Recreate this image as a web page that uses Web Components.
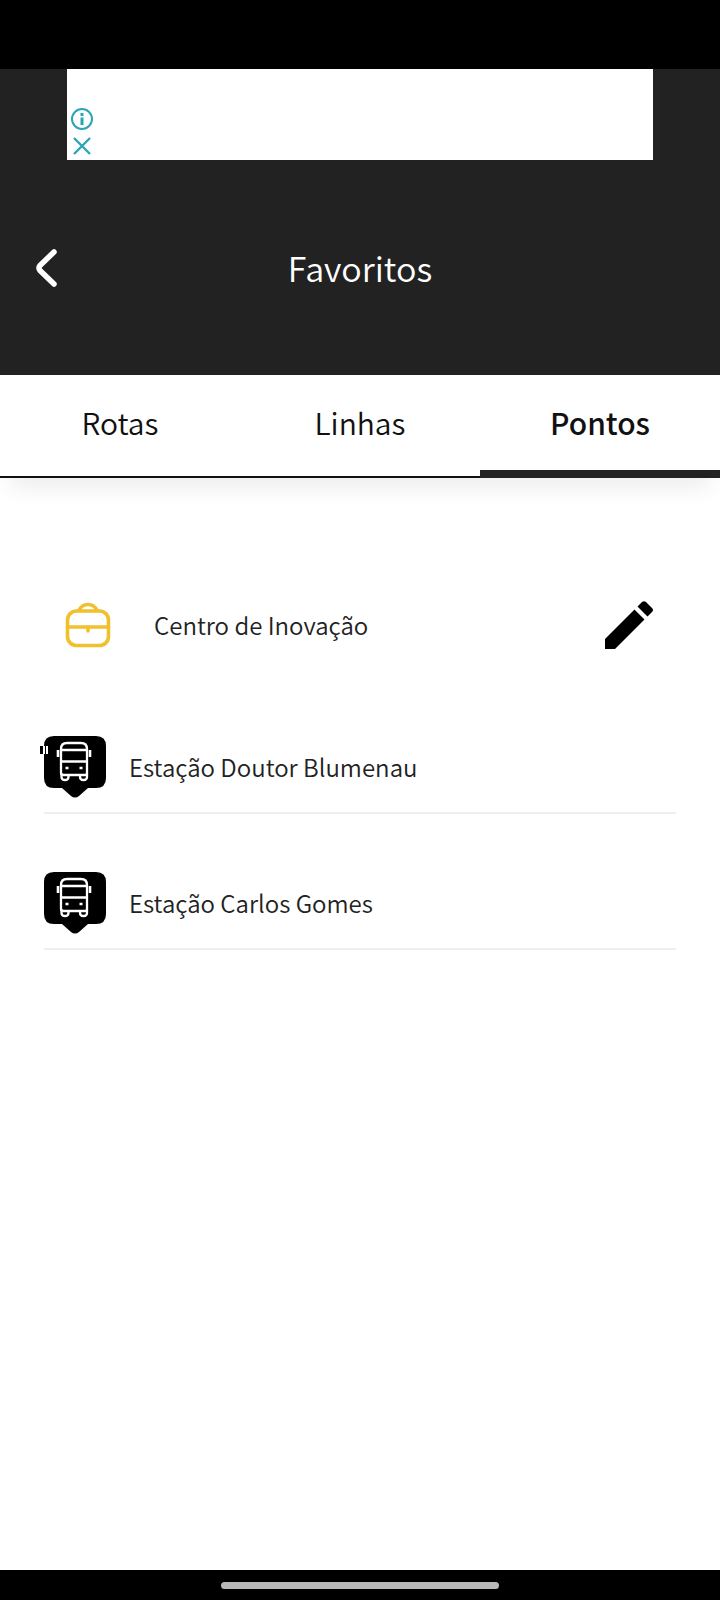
<!DOCTYPE html>
<html lang="pt-BR">
<head>
<meta charset="utf-8">
<meta name="viewport" content="width=device-width, initial-scale=1">
<title>Favoritos</title>
<style>
  body {
    margin: 0;
    background: #fff;
    color: #222;
    font-family: "Noto Sans CJK JP", "Noto Sans", sans-serif;
  }
</style>
</head>
<body>
<fav-app>
  <ad-banner slot="ad"></ad-banner>
  <app-header slot="header">Favoritos</app-header>
  <tab-bar slot="tabs">
    <tab-item>Rotas</tab-item>
    <tab-item>Linhas</tab-item>
    <tab-item active>Pontos</tab-item>
  </tab-bar>
  <saved-place>Centro de Inovação</saved-place>
  <bus-stop marked>Estação Doutor Blumenau</bus-stop>
  <bus-stop>Estação Carlos Gomes</bus-stop>
</fav-app>

<script>
class FavApp extends HTMLElement {
  connectedCallback() {
    let shadow = this.attachShadow({ mode: "open" });
    shadow.innerHTML = `
    <style>
      :host {
        display: flex;
        flex-direction: column;
        min-height: 100vh;
      }

      .status {
        height: 69px;
        background: #000;
      }

      .top {
        background: #222;
      }

      main {
        flex: 1;
        padding: 108px 44px 24px;
      }

      .nav {
        display: flex;
        align-items: center;
        justify-content: center;
        height: 30px;
        background: #000;
      }

      .handle {
        width: 278px;
        height: 7px;
        border-radius: 4px;
        background: #b8b8b8;
      }
    </style>

    <div class="status"></div>
    <div class="top">
      <slot name="ad"></slot>
      <slot name="header"></slot>
    </div>
    <slot name="tabs"></slot>
    <main><slot></slot></main>
    <div class="nav"><div class="handle"></div></div>
`;
  }
}

class AdBanner extends HTMLElement {
  connectedCallback() {
    let shadow = this.attachShadow({ mode: "open" });
    shadow.innerHTML = `
    <style>
      :host {
        display: flex;
        flex-direction: column;
        align-items: flex-start;
        justify-content: flex-end;
        gap: 5px;
        box-sizing: border-box;
        height: 91px;
        margin: 0 67px;
        padding: 4px 3px;
        background: #fff;
      }

      button {
        display: block;
        padding: 0;
        border: 0;
        background: none;
        color: #2aa5b5;
      }

      svg {
        display: block;
      }
    </style>

    <button aria-label="Informações do anúncio">
      <svg width="24" height="24" viewBox="0 0 24 24" fill="none" stroke="currentColor">
        <circle cx="12" cy="12" r="10" stroke-width="2"/>
        <path d="M12 10.5v7.5M12 6v3" stroke-width="3"/>
      </svg>
    </button>
    <button aria-label="Fechar anúncio">
      <svg width="24" height="20" viewBox="0 0 24 20" fill="none" stroke="currentColor" stroke-width="2.4">
        <path d="M4 2l16 16M20 2L4 18"/>
      </svg>
    </button>
`;
  }
}

class AppHeader extends HTMLElement {
  connectedCallback() {
    let shadow = this.attachShadow({ mode: "open" });
    shadow.innerHTML = `
    <style>
      :host {
        display: grid;
        grid-template-columns: 64px 1fr 64px;
        align-items: center;
        height: 215px;
        color: #fff;
      }

      button {
        padding: 0 0 0 34px;
        border: 0;
        background: none;
        color: inherit;
      }

      svg {
        display: block;
      }

      h1 {
        margin: 0;
        font-size: 34px;
        font-weight: 350;
        line-height: 48px;
        text-align: center;
      }
    </style>

    <button aria-label="Voltar">
      <svg width="24" height="40" viewBox="0 0 24 40" fill="none" stroke="currentColor" stroke-width="5.5" stroke-linecap="round" stroke-linejoin="round">
        <path d="M20 4L6 17.500Q4 20 6 22.500L20 36"/>
      </svg>
    </button>
    <h1><slot></slot></h1>
`;
  }
}

class TabBar extends HTMLElement {
  connectedCallback() {
    let shadow = this.attachShadow({ mode: "open" });
    shadow.innerHTML = `
    <style>
      :host {
        display: block;
        box-shadow: 0 20px 20px -10px rgba(0, 0, 0, 0.07);
      }

      nav {
        display: grid;
        grid-template-columns: repeat(3, 1fr);
        height: 103px;
      }
    </style>

    <nav><slot></slot></nav>
`;
  }
}

class TabItem extends HTMLElement {
  connectedCallback() {
    let shadow = this.attachShadow({ mode: "open" });
    shadow.innerHTML = `
    <style>
      :host {
        display: grid;
        background: #fff;
      }

      button {
        box-sizing: border-box;
        padding: 25px 0 0;
        border: 0;
        border-bottom: 2px solid #111;
        background: none;
        color: #111;
        font-family: inherit;
        font-size: 30px;
        font-weight: 350;
        line-height: 44px;
        display: flex;
        justify-content: center;
        align-items: flex-start;
      }

      :host([active]) button {
        border-bottom: 8px solid #222;
        font-weight: 500;
      }
    </style>

    <button><slot></slot></button>
`;
  }
}

class SavedPlace extends HTMLElement {
  connectedCallback() {
    let shadow = this.attachShadow({ mode: "open" });
    shadow.innerHTML = `
    <style>
      :host {
        display: flex;
        align-items: center;
        height: 78px;
        margin-bottom: 14px;
        padding: 0 22px 0 21px;
        font-size: 24px;
        font-weight: 350;
        line-height: 36px;
      }

      svg {
        display: block;
      }

      span {
        flex: 1;
        padding-left: 43px;
      }

      button {
        padding: 0;
        border: 0;
        background: none;
        color: #000;
      }
    </style>

    <svg width="46" height="46" viewBox="0 0 46 46" fill="none" stroke="#f0c12e" stroke-width="3.6" stroke-linecap="round" stroke-linejoin="round">
      <rect x="2.5" y="9" width="41" height="34.5" rx="9"/>
      <path d="M14 8.5C16 4 18.5 2.5 23 2.5S30 4 32 8.5M3 25h40M23 26v3"/>
    </svg>
    <span><slot></slot></span>
    <button aria-label="Editar">
      <svg width="50" height="50" viewBox="0 0 50 50" fill="currentColor">
        <path d="M1 39L30.5 9.5L40.5 19.5L11 49H1zM33.5 6.5L38 2Q40 .5 42 2L48 8Q50 10 48 12L43.5 16.5z"/>
      </svg>
    </button>
`;
  }
}

class BusStop extends HTMLElement {
  connectedCallback() {
    // small tick drawn over the left edge of the pin
    const tick = this.hasAttribute("marked")
      ? `<g stroke="none"><path d="M-4 10h8v8h-8z" fill="#000"/><path d="M-1 10h2v8h-2zM2 10h2v8h-2z" fill="#fff"/></g>`
      : "";
    let shadow = this.attachShadow({ mode: "open" });
    shadow.innerHTML = `
    <style>
      :host {
        display: block;
        padding-top: 44px;
      }

      a {
        display: flex;
        align-items: center;
        gap: 23px;
        height: 90px;
        border-bottom: 2px solid #eee;
        color: inherit;
        font-size: 24px;
        font-weight: 350;
        line-height: 36px;
        text-decoration: none;
      }

      svg {
        display: block;
        overflow: visible;
      }
    </style>

    <a href="#">
      <svg width="62" height="62" viewBox="0 0 62 62" fill="none" stroke="#fff" stroke-width="2.3">
        <path d="M10 0h42q10 0 10 10v32q0 10-10 10h-8l-9 8q-4 3-8 0l-9-8h-8q-10 0-10-10v-32q0-10 10-10z" fill="#000" stroke="none"/>
        <path d="M17 37V13q0-6 6-6h14q6 0 6 6v24q0 2-2 2H19q-2 0-2-2zM17 14h26M17 25.5h26"/>
        <path d="M14 14v7M46 14v7" stroke-width="2.6"/>
        <path d="M17.5 37v4q0 3 3.500 3t3.500-3v-2M36 39v2q0 3 3.500 3t3.500-3v-4"/>
        <path d="M21.500 32h3M35.500 32h3" stroke-width="2.6"/>
        ${tick}
      </svg>
      <slot></slot>
    </a>
`;
  }
}

customElements.define("fav-app", FavApp);
customElements.define("ad-banner", AdBanner);
customElements.define("app-header", AppHeader);
customElements.define("tab-bar", TabBar);
customElements.define("tab-item", TabItem);
customElements.define("saved-place", SavedPlace);
customElements.define("bus-stop", BusStop);
</script>
</body>
</html>
